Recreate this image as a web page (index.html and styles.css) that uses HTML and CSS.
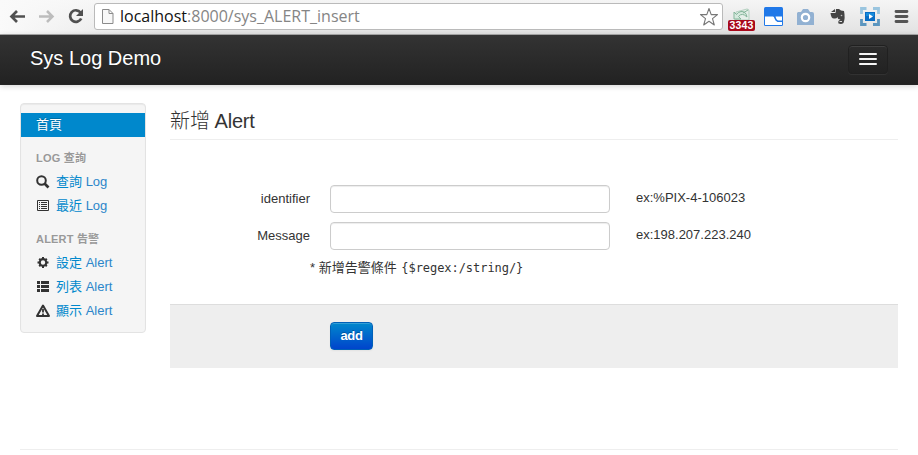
FILE: index.html
```html
<!DOCTYPE html>
<html lang="zh-Hant">
<head>
<meta charset="utf-8">
<title>Sys Log Demo</title>
<link rel="stylesheet" href="styles.css">
</head>
<body>
<header class="toolbar">
  <svg class="nav-icons" width="94" height="34" viewBox="0 0 94 34" fill="none">
    <path d="M25 16.500H12M17 11l-5.500 5.500L17 22" stroke="#505050" stroke-width="2.700"/>
    <path d="M39 16.500h13M47 11l5.500 5.500L47 22" stroke="#bdbdbd" stroke-width="2.500"/>
    <path d="M80.500 12.500A5.800 5.800 0 1 0 81.200 18.500" stroke="#505050" stroke-width="2.700"/>
    <path d="M83 9v7h-7z" fill="#505050"/>
  </svg>
  <div class="address">
    <svg class="page" width="13" height="17" viewBox="0 0 13 17"><path d="M1.500 1.500h6.500l4 4v10h-10.500zM8 1.500v4h4" fill="#f8f8f8" stroke="#8b8b8b"/></svg>
    <span class="url">localhost<span class="path">:8000/sys_ALERT_insert</span></span>
    <svg class="star" width="20" height="20" viewBox="0 0 20 20"><path d="M10 1.500l2.200 6.100h6.300l-5 4 1.800 6.400-5.300-3.700L4.700 18l1.800-6.400-5-4h6.300z" fill="#fff" stroke="#777" stroke-width="1.100" stroke-linejoin="round"/></svg>
  </div>
  <div class="mail">
    <svg width="18" height="15" viewBox="0 0 18 15"><path d="M3 4l11-3q2 0 2 2v9H3z" fill="#e5efe9" stroke="#b5d1c1"/><path d="M1 4v7h7L5.500 8.500Q9 4 14 9q-1-6-6-5.500Q5 4 3.500 6.500z" fill="#d6e9de" stroke="#85b69b"/><path d="M10 5l5-3" stroke="#85b69b"/></svg>
    <span class="count">3343</span>
  </div>
  <svg class="extensions" width="154" height="34" viewBox="0 0 154 34">
    <rect width="19" height="19" x="0" y="7" rx="1.500" fill="#2078e8"/><path d="M1 16.500h8q1 0 1.500 2t3 3.500H18v3H1zM11.500 16.500H18v4h-3.500q-2 0-3-4z" fill="#fff"/>
    <path d="M34 12h3l2-3h5l2 3h2q2 0 2 2v11H33V13z" fill="#92b1d2"/><circle cx="41.500" cy="17.500" r="3.700" fill="#92b1d2" stroke="#fff" stroke-width="2.200"/>
    <path d="M67 12l4-3v3zM72 9h3l2 1.500 3 .5q1.500 7-.5 12-2 1.500-5 .5-1-3 2-4-3 0-3-2.500-1 2-3.500 1.500-3 0-3.500-5.500h5z" fill="#444"/><circle cx="77.500" cy="15.500" r=".8" fill="#bbb"/><path d="M75.500 21.500h2.500" stroke="#ddd"/>
    <g fill="none" stroke-width="2.800"><path d="M97.500 14V8.500h5M109 8.500h5.500V14" stroke="#9ac5df"/><path d="M97.500 19v5.500h5M109 24.500h5.500V19" stroke="#5c96bf"/></g><rect x="101" y="12" width="10" height="9" fill="#086dc5"/><rect x="102" y="13" width="8" height="3" fill="#168bdc"/><path d="M105 14l4 2.500-4 2.500z" fill="#fff"/>
    <path d="M132 11.500h11M132 16.500h11M132 21.500h11" stroke="#555" stroke-width="2.800" stroke-linecap="round"/>
  </svg>
</header>
<nav class="navbar">
  <a class="brand">Sys Log Demo</a>
  <button class="toggle" aria-label="Menu"><i></i><i></i><i></i></button>
</nav>
<div class="layout">
  <aside class="sidebar">
    <a class="active">首頁</a>
    <h3>LOG 查詢</h3>
    <a><svg viewBox="0 0 14 14"><circle cx="5.500" cy="5.500" r="4.300" fill="none" stroke="#333" stroke-width="2"/><path d="M8.500 8.500l4 4" stroke="#333" stroke-width="2.600"/></svg>查詢 <span>Log</span></a>
    <a><svg viewBox="0 0 14 14"><path d="M1.500 1.500h11v10h-11z" fill="none" stroke="#333"/><path d="M3 3.500h1M5 3.500h6M3 5.500h1M5 5.500h6M3 7.500h1M5 7.500h6M3 9.500h1M5 9.500h6" stroke="#333"/></svg>最近 <span>Log</span></a>
    <h3>ALERT 告警</h3>
    <a><svg viewBox="0 0 14 14" fill="none" stroke="#333"><circle cx="7" cy="6.500" r="3.300" stroke-width="2.200"/><path d="M7 1v2M7 10v2M1.500 6.500h2M10.500 6.500h2M3.200 2.700L4.500 4M9.500 9l1.300 1.300M10.800 2.700L9.500 4M4.500 9l-1.300 1.300" stroke-width="2"/></svg>設定 <span>Alert</span></a>
    <a><svg viewBox="0 0 14 14" fill="#333"><path d="M1 1h3v3H1zM5 1h8v3H5zM1 5h3v3H1zM5 5h8v3H5zM1 9h3v3H1zM5 9h8v3H5z"/></svg>列表 <span>Alert</span></a>
    <a><svg viewBox="0 0 14 14"><path d="M7 1.500L13 12H1z" fill="none" stroke="#333" stroke-width="2" stroke-linejoin="round"/><path d="M7 5v3.500M7 9.500V11" stroke="#333" stroke-width="1.800"/></svg>顯示 <span>Alert</span></a>
  </aside>
  <main>
    <h1>新增 <span>Alert</span></h1>
    <form>
      <div class="row"><label for="identifier">identifier</label><input id="identifier"><span class="example">ex:%PIX-4-106023</span></div>
      <div class="row"><label for="message">Message</label><input id="message"><span class="example">ex:198.207.223.240</span></div>
      <p class="help"><span>*</span> 新增告警條件 <code>{$regex:/string/}</code></p>
      <div class="actions"><button type="button">add</button></div>
    </form>
  </main>
</div>
<footer></footer>
</body>
</html>
```
FILE: styles.css
```css
* { box-sizing: border-box; }
body { margin: 0; height: 455px; overflow: hidden; background: #fff; color: #333; font: 13px/20px "Liberation Sans", "Noto Sans CJK TC", sans-serif; }
.toolbar { height: 35px; display: flex; background: linear-gradient(90deg, #fafafa, transparent 18%), linear-gradient(#f5f5f5, #e2e2e2); border-bottom: 1px solid #aaa; }
.nav-icons { flex: none; }
.address { width: 629px; height: 27px; margin-top: 3px; display: flex; align-items: center; padding: 0 3px 0 6px; background: #fff; border: 1px solid #bababa; border-radius: 3px; }
.page { margin-right: 6px; }
.url { flex: 1; margin-top: -2px; font: 16px/24px "Open Sans", sans-serif; letter-spacing: 0; color: #111; white-space: nowrap; }
.path { color: #858585; }
.mail { width: 27px; margin: 8px 9px 0 5px; display: flex; flex-direction: column; align-items: center; }
.mail svg { flex: none; }
.count { width: 27px; height: 11px; margin-top: -3px; z-index: 1; background: #a8091b; border-radius: 2px; color: #fff; font: bold 10.5px/11px "Liberation Sans", sans-serif; text-align: center; letter-spacing: .1px; }
.extensions { flex: none; }
.navbar { height: 50px; display: flex; justify-content: space-between; align-items: center; padding: 0 30px; background: linear-gradient(#333, #222); border-bottom: 1px solid #252525; box-shadow: 0 1px 6px rgba(0,0,0,.18); }
.brand { color: #fff; font-size: 20px; line-height: 20px; margin-top: -4px; text-shadow: 0 -1px 0 rgba(0,0,0,.25); }
.toggle { width: 40px; height: 29px; margin-top: -1px; padding: 7px 10px 9px; display: grid; gap: 3px; background: linear-gradient(#2c2c2c, #222); border: 1px solid #202020; border-radius: 4px; box-shadow: inset 0 1px 0 rgba(255,255,255,.1), 0 1px 0 rgba(255,255,255,.06); }
.toggle i { height: 2px; width: 18px; background: #f5f5f5; border-radius: 1px; }
.layout { display: flex; gap: 24px; padding: 18px 20px 0; }
.sidebar { width: 126px; height: 230px; padding: 9px 0; background: #f5f5f5; border: 1px solid #e3e3e3; border-radius: 4px; box-shadow: inset 0 1px 1px rgba(0,0,0,.05); }
.sidebar a { display: flex; height: 24px; align-items: center; padding-left: 15px; color: #08c; white-space: pre; }
.sidebar a svg { width: 14px; height: 14px; margin-right: 6px; }
.sidebar .active { background: #08c; color: #fff; text-shadow: 0 -1px 0 rgba(0,0,0,.2); }
.sidebar h3 { height: 24px; margin: 9px 0 0; padding-left: 15px; color: #999; font-size: 11px; line-height: 24px; letter-spacing: .2px; text-shadow: 0 1px 0 rgba(255,255,255,.5); }
.sidebar span { color: #2c86ca; }
main { width: 728px; }
h1 { height: 37px; margin: 0; font-size: 20px; font-weight: 300; line-height: 37px; border-bottom: 1px solid #eee; white-space: nowrap; }
h1 span { margin-left: -1px; letter-spacing: -.2px; }
form { padding-top: 45px; }
.row { display: flex; height: 28px; margin-bottom: 9px; }
.row label { width: 140px; margin-right: 20px; padding-top: 4px; text-align: right; }
.row input { width: 280px; height: 28px; border: 1px solid #ccc; border-radius: 4px; background: #fff; box-shadow: inset 0 1px 1px rgba(0,0,0,.075); }
.example { margin-left: 26px; padding-top: 3px; }
.help { height: 20px; margin: -1px 0 26px 140px; white-space: pre; }
code { font: 12px "DejaVu Sans Mono", monospace; margin-left: 1px; letter-spacing: -.05px; }
.actions { height: 64px; padding: 17px 0 0 160px; background: #eee; border-top: 1px solid #ddd; }
.actions button { width: 43px; height: 28px; padding: 0; color: #fff; font: bold 13px/20px "Liberation Sans", sans-serif; letter-spacing: -.4px; background: linear-gradient(#08c, #04c); border: 1px solid #0060b8; border-radius: 4px; box-shadow: inset 0 1px 0 rgba(255,255,255,.2), 0 1px 2px rgba(0,0,0,.05); text-shadow: 0 -1px 0 rgba(0,0,0,.25); }
footer { margin: 81px 20px 0; border-top: 1px solid #eee; }
```
